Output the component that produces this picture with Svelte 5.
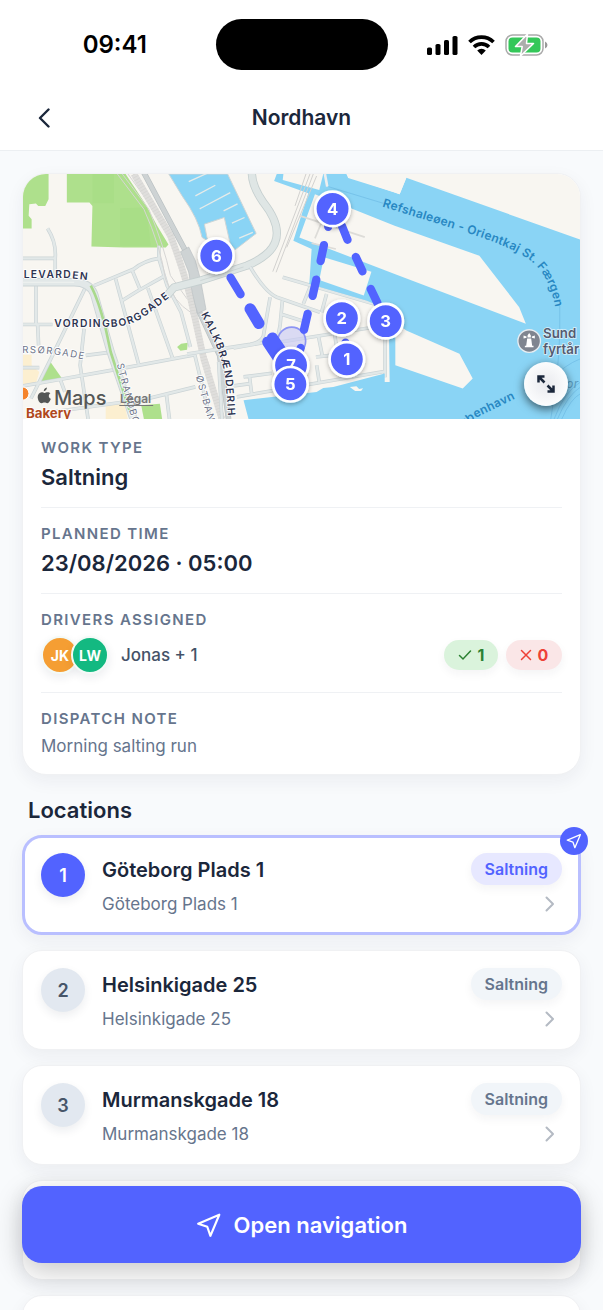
<script>
  const stops = [
    { n: 1, name: 'Göteborg Plads 1', address: 'Göteborg Plads 1', type: 'Saltning', active: true },
    { n: 2, name: 'Helsinkigade 25', address: 'Helsinkigade 25', type: 'Saltning', active: false },
    { n: 3, name: 'Murmanskgade 18', address: 'Murmanskgade 18', type: 'Saltning', active: false }
  ];

  const pins = [
    { n: 4, x: 398, y: 129 },
    { n: 6, x: 48, y: 270 },
    { n: 2, x: 426, y: 458 },
    { n: 3, x: 558, y: 467 },
    { n: 1, x: 441, y: 582 },
    { n: 7, x: 273, y: 600 },
    { n: 5, x: 271, y: 657 }
  ];

  const streetsWest =
    'M36 278H133 M110 188Q137 230 133 278V345 M36 477H125 M75 352V477 M80 477L83 540 M222 370L120 580L60 700 M250 360L370 310Q400 285 445 278 M315 340L385 600 M365 315L390 375 M412 368L487 580 M335 405L380 377L460 332 M445 240V278L470 360L512 440L540 545 M36 662L150 642L330 610L555 568 M60 750L200 730L330 712 M380 708L555 665 M553 568L600 762 M225 570L290 562 M220 490L208 600L232 762 M468 690L477 762 M148 642L162 680 M36 607H85';
  const streetsMid =
    'M150 304Q195 380 230 395L360 440 M248 335L540 420 M247 405L240 480L228 540 M330 365L310 415 M380 385L365 440 M240 445L310 467 M100 548L200 530 M355 510L368 575 M348 575L392 570 M405 510L410 545 M110 695L557 618 M350 600L358 650 M130 635L215 624 M148 635L155 690 M100 662L150 655 M556 520V636 M240 530L555 480 M55 590L65 762 M210 395L190 510Q185 530 150 537L-40 566';
</script>

{#snippet plane()}
  <svg class="plane" viewBox="0 0 24 24" aria-hidden="true">
    <path d="M21.5 2.5L2 10.8l8.4 2.8 2.900 8.400z" />
  </svg>
{/snippet}

<div class="app">
  <div class="status">
    <span class="clock">09:41</span>
    <span class="island"></span>
    <span class="signals">
      <svg width="31" height="20" viewBox="0 0 31 20" aria-label="Signal">
        <rect x="0" y="12.5" width="5" height="7.5" rx="1.6" /><rect x="8.5" y="9" width="5" height="11" rx="1.6" />
        <rect x="17" y="5" width="5" height="15" rx="1.6" /><rect x="25.5" y="1" width="5" height="19" rx="1.6" />
      </svg>
      <svg width="27" height="20" viewBox="0 0 27 20" aria-label="Wi-Fi">
        <g fill="none" stroke="#000" stroke-width="3.7"><path d="M1.5 7a17 17 0 0 1 24 0" /><path d="M6 12a10.700 10.700 0 0 1 15 0" /></g>
        <path d="M13.5 20l-4.300-4.400a5.800 5.800 0 0 1 8.600 0z" />
      </svg>
      <svg width="43" height="22" viewBox="0 0 43 22" aria-label="Charging">
        <rect x="1" y="1" width="37" height="20" rx="6.5" fill="none" stroke="#aaa" stroke-width="1.5" />
        <rect x="3.5" y="3.5" width="32" height="15" rx="4" fill="#34c759" />
        <path d="M40 7.500q2.500 1 2.500 3.500t-2.500 3.500z" fill="#999" />
        <path d="M22.500 0L10.500 12.500h6.700L15.500 22 28.500 9.500h-7z" fill="#acaeac" stroke="#fff" stroke-width="1.5" stroke-linejoin="round" />
      </svg>
    </span>
  </div>

  <header>
    <button class="back" aria-label="Back">
      <svg width="12" height="20" viewBox="0 0 12 20"><path d="M10.5 1.500L2 10l8.500 8.500" /></svg>
    </button>
    <h1>Nordhavn</h1>
  </header>

  <main>
    <section class="card overview">
      <div class="map">
        <svg viewBox="36 24 1677 738" preserveAspectRatio="xMidYMid slice" role="img" aria-label="Route map of Nordhavn">
          <rect x="36" y="24" width="1677" height="738" fill="#f8f6f1" />

          <g fill="#aee08c">
            <path d="M36 24H113V100L103 120H82L75 113L55 115L53 150L62 160V188H36z" />
            <path d="M168 24H345L405 115L440 180L474 236L466 245H340L242 242L245 120L236 110H168z" />
            <path d="M115 585L155 642L78 655z" />
            <path d="M500 545L512 535L532 532L530 553L510 556z" />
            <path d="M392 720L448 716L455 762H400z" />
          </g>
          <path d="M245 24H310V112H245z M328 127L408 125L420 240H328z" fill="#a5dc83" opacity=".6" />
          <path d="M36 568H62V600L85 620L75 655L36 660z M285 718L340 712L352 762H285z" fill="#fcefd0" />

          <g fill="none" stroke-linejoin="round">
            <path d={streetsWest} stroke="#cbd4d6" stroke-width="11" />
            <path d={streetsWest} stroke="#e2e8e8" stroke-width="7" />
            <path d="M36 350H190Q235 350 250 385L300 560L370 765" stroke="#cbd4d6" stroke-width="25" />
            <path d="M36 350H190Q235 350 250 385L300 560L370 765" stroke="#e2e8e8" stroke-width="20" />
            <path d="M36 350H190" stroke="#f0f2f0" stroke-width="3" />
            <path d="M240 360Q262 400 285 490L300 560L358 740" stroke="#a9d98c" stroke-width="8" />
            <g stroke="#d6d5d4" stroke-width="3">
              <path d="M320 24L400 130Q450 240 465 340Q490 410 540 440L600 610" />
              <path d="M335 24L415 130Q460 240 480 330L530 400" />
              <path d="M352 24L450 160L520 320" />
            </g>
            <path d="M370 24L480 210Q530 340 552 450L580 580L635 762" stroke="#dfdedc" stroke-width="20" />
            <path d="M370 24L480 210Q530 340 552 450L580 580L635 762" stroke="#cfcecc" stroke-width="20" stroke-dasharray="2 7" opacity=".6" />
            <path d="M400 20L525 255Q548 320 567 440L628 570L655 762" stroke="#b9c0c2" stroke-width="17" />
            <path d="M400 20L525 255Q548 320 567 440L628 570L655 762" stroke="#ced3d4" stroke-width="13" />
          </g>
          <path d="M510 258L535 244L555 285L570 340L587 432L562 444Q545 390 535 320z" fill="#ced3d4" stroke="#b9c0c2" stroke-width="2" />

          <g transform="translate(570)">
            <g fill="none" stroke-linejoin="round">
              <path d="M155 20Q155 60 190 110Q245 180 225 230Q210 270 140 300L0 345L-80 366L-105 395" stroke="#c5cfcf" stroke-width="25" />
              <path d="M155 20Q155 60 190 110Q245 180 225 230Q210 270 140 300L0 345L-80 366L-105 395" stroke="#dfe6e5" stroke-width="20" />
              <path d="M130 304L0 345" stroke="#c5cfcf" stroke-width="2" />
              <path d={streetsMid} stroke="#cbd4d6" stroke-width="11" />
              <path d={streetsMid} stroke="#e2e8e8" stroke-width="7" />
            </g>
            <path d="M-95 24H82L168 203L105 252L90 235L72 155L12 175L22 225L5 215Q-5 160 -55 90z" fill="#8ad4f5" stroke="#ced5d6" stroke-width="3" />
            <g stroke="#e6ebe9" stroke-width="4" fill="none">
              <path d="M-35 47L20 22M-15 90L45 58M0 128L90 80M70 135L112 114M95 172L133 155M117 217L158 200M2 127L-2 129" />
            </g>
            <path fill="#8ad4f5" d="M222 45L230 24H440L445 32L585 80L600 85L620 35L1145 222V762H145L130 705L350 680L370 668L400 665L555 625V650H570L567 440L540 422L500 405L328 355L335 250L280 225L325 82z" />
            <g fill="#f8f6f1">
              <path d="M250 24H370L358 72L248 42z" />
              <path d="M440 24H625L600 85L585 80L445 36z" />
              <path d="M345 85L298 215L585 325L980 475L960 425L840 270L655 205L585 180L440 122z" />
              <path d="M372 275L515 318L492 390L358 343z" />
              <path d="M587 470L620 495L780 565L820 640L790 670L587 600z" />
              <path d="M450 665l20-2 8 8 12-2-6 8h-18z" />
            </g>
            <g fill="none" stroke="#d2d1cf" stroke-width="3">
              <path d="M330 24L218 318M340 24L228 320M350 30L260 245M318 24L285 120" />
              <path d="M300 150L495 214M375 145L345 218M335 232L408 250" stroke-width="5" stroke="#dddcd8" />
              <path d="M375 24L382 62" stroke="#eee" stroke-width="8" />
            </g>
            <path d="M385 62L550 112M1082 420V500Q1080 610 1055 762M1145 580Q1095 600 1060 640M1145 650Q1095 680 1065 762M1145 665Q1105 690 1075 762M1145 685Q1115 700 1088 762" fill="none" stroke="#6cb9e4" stroke-width="2" />

            <circle cx="275" cy="527" r="42" fill="#c9cbf4" fill-opacity=".65" stroke="#8d95f3" stroke-width="5" />
            <g fill="none" stroke="#5263ff" stroke-width="25" stroke-linecap="round">
              <path d="M91 336L121 386M385 183V180M372 238L362 286M349 342L338 391M323 445L312 493M302 548L298 560M426 180L443 222M468 274L488 317M513 370L533 412M437 532V540" />
              <path d="M150 430L176 474M203 530L232 574M217 518L240 552" stroke-width="34" />
            </g>
          </g>

          <defs>
            <path id="p-levarden" d="M38 338L180 338L256 346" />
            <path id="p-vording" d="M130 484H280Q350 488 400 455L530 355" />
            <path id="p-rsor" d="M34 563Q130 560 250 590" />
            <path id="p-strand" d="M318 597L345 700L375 800" />
            <path id="p-ostban" d="M556 634L600 790L620 860" />
            <path id="p-kalk" d="M572 446L604 510Q640 590 646 650L662 860" />
            <path id="p-refs" d="M1117 122L1345 192Q1500 240 1550 275Q1640 330 1646 500" />
            <path id="p-havn" d="M1362 788L1400 758L1560 680" />
            <filter id="pin-shadow" x="-30%" y="-30%" width="160%" height="160%"><feDropShadow dx="0" dy="5" stdDeviation="6" flood-opacity=".3" /></filter>
          </defs>
          <g class="street">
            <text><textPath href="#p-levarden">LEVARDEN</textPath></text>
            <text><textPath href="#p-vording">VORDINGBORGGADE</textPath></text>
            <text><textPath href="#p-kalk">KALKBRÆNDERIH</textPath></text>
          </g>
          <g class="street minor">
            <text><textPath href="#p-rsor">RSØRGADE</textPath></text>
            <text><textPath href="#p-strand">STRANDBO</textPath></text>
            <text><textPath href="#p-ostban">ØSTBAN</textPath></text>
          </g>
          <g class="sea">
            <text><textPath href="#p-refs">Refshaleøen - Orientkaj St. Færgen</textPath></text>
            <text><textPath href="#p-havn">øbenhavn</textPath></text>
            <text class="faint" x="1672" y="668">or</text>
          </g>

          <g class="place">
            <text x="1602" y="518">Sund</text>
            <text x="1602" y="567">fyrtår</text>
          </g>
          <g transform="translate(1560 527)">
            <circle r="34" fill="#7f8590" stroke="#e7edf2" stroke-width="4" />
            <path d="M-6-8H6L9 14H13V19H-13V14H-9z M-5-17L0-24L5-17V-11H-5z M-17-17L-8-14V-10L-17-8z M17-17L8-14V-10L17-8z" fill="#fff" />
          </g>

          <circle cx="34" cy="685" r="20" fill="#f5832b" stroke="#fff" stroke-width="3" />
          <text class="bakery" x="45" y="758">Bakery</text>
          <g fill="#555756">
            <path transform="translate(79 667) scale(2)" d="M14.500 0c.2 2.600-2 5.400-4.700 5.500C9.500 3 11.900.3 14.500 0zM19.800 8.400c-3.600 2.200-3 7 .7 8.500-.8 2.400-3 6.600-5.300 6.700-1.700.1-2.300-1-4.300-1s-2.700 1-4.300 1C3.300 23.700.6 18.300.6 14.200c0-4 2.500-7.100 6-7.200 1.700 0 3.200 1.100 4.200 1.100s2.800-1.300 4.900-1.100c1.600.1 3.200.8 4.100 1.400z" />
            <text class="brand" x="129" y="719">Maps</text>
          </g>
          <text class="legal" x="328" y="714">Legal</text>
          <path d="M326 721H428" stroke="#777" stroke-width="3" />

          <g transform="translate(570)" class="pins">
            {#each pins as p}
              <g filter="url(#pin-shadow)">
                <circle cx={p.x} cy={p.y} r="52" />
                <text x={p.x} y={p.y + 18}>{p.n}</text>
              </g>
            {/each}
          </g>
        </svg>
        <button class="expand" aria-label="Expand map">
          <svg width="20" height="20" viewBox="0 0 20 20"><path d="M2.500 8.500V2.500H8.500M3 3L8.500 8.500M17.500 11.500V17.500H11.500M17 17L11.500 11.500" /></svg>
        </button>
      </div>

      <dl>
        <div class="row"><dt>WORK TYPE</dt><dd class="value">Saltning</dd></div>
        <div class="row"><dt>PLANNED TIME</dt><dd class="value">23/08/2026 · 05:00</dd></div>
        <div class="row">
          <dt>DRIVERS ASSIGNED</dt>
          <dd class="drivers">
            <span class="avatar amber">JK</span><span class="avatar green">LW</span>
            <span class="names">Jonas + 1</span>
            <span class="count yes">
              <svg width="14" height="12" viewBox="0 0 14 12"><path d="M1.500 6.500L5 10 12.500 2" /></svg>1
            </span>
            <span class="count no">
              <svg width="12" height="12" viewBox="0 0 12 12"><path d="M1.500 1.500l9 9M10.500 1.500l-9 9" /></svg>0
            </span>
          </dd>
        </div>
        <div class="row"><dt>DISPATCH NOTE</dt><dd class="note">Morning salting run</dd></div>
      </dl>
    </section>

    <h2>Locations</h2>
    <ol>
      {#each stops as s}
        <li class="card stop" class:active={s.active}>
          <span class="num">{s.n}</span>
          <div class="text">
            <strong>{s.name}</strong>
            <span>{s.address}</span>
          </div>
          <div class="side">
            <span class="tag">{s.type}</span>
            <svg width="10" height="16" viewBox="0 0 10 16" aria-hidden="true"><path d="M1.500 1.500L8 8l-6.500 6.500" /></svg>
          </div>
          {#if s.active}<span class="here">{@render plane()}</span>{/if}
        </li>
      {/each}
      <li class="card stop"></li>
      <li class="card stop"></li>
    </ol>
  </main>

  <button class="cta">{@render plane()}Open navigation</button>
</div>

<style>
  :global(body) { margin: 0; }
  * { box-sizing: border-box; }
  button { font: inherit; border: 0; padding: 0; cursor: pointer; }
  .app {
    position: relative;
    display: flex;
    flex-direction: column;
    height: 100vh;
    overflow: hidden;
    background: #f8fafc;
    color: #1b273b;
    font-family: Inter, "Liberation Sans", sans-serif;
  }
  .status {
    display: grid;
    grid-template-columns: 1fr 172px 1fr;
    align-items: center;
    padding: 19px 0 16px;
    background: #fff;
    color: #000;
  }
  .clock { justify-self: center; padding-left: 14px; font-size: 24px; font-weight: 600; }
  .island { height: 51px; border-radius: 26px; background: #000; }
  .signals { display: flex; align-items: center; justify-content: center; gap: 10px; margin-right: 16px; }
  .signals svg { flex: none; }
  header {
    display: grid;
    grid-template-columns: 44px 1fr 44px;
    align-items: center;
    height: 65px;
    padding: 0 22px;
    background: #fff;
    border-bottom: 1px solid #eceff2;
  }
  .back { display: grid; place-items: center; height: 44px; background: none; }
  .back path { fill: none; stroke: #1b273b; stroke-width: 2.4; stroke-linecap: round; stroke-linejoin: round; }
  h1 { margin: 0; text-align: center; font-size: 21px; line-height: 28px; font-weight: 600; }
  main { flex: 1; min-height: 0; overflow-y: auto; scrollbar-width: none; padding: 22px 22px 0; }
  .card {
    background: #fff;
    border: 1px solid #f0f1f3;
    border-radius: 20px;
    box-shadow: 0 6px 18px rgba(30, 40, 60, .06);
  }
  .overview { overflow: hidden; border-radius: 24px; }
  .map { position: relative; display: flex; }
  .map > svg { display: block; width: 100%; height: auto; }
  .map text { font-family: Inter, "Liberation Sans", sans-serif; }
  .street { font-size: 31px; font-weight: 600; letter-spacing: 4px; fill: #2d3350; stroke: #fff; stroke-width: 5px; paint-order: stroke; }
  .minor { font-weight: 400; font-size: 29px; fill: #6e7488; }
  .sea { font-size: 36px; font-weight: 600; fill: #2787c2; letter-spacing: 1px; }
  .sea .faint { fill: #5b9fc4; font-style: italic; font-weight: 400; }
  .place { font-size: 40px; font-weight: 600; fill: #545b70; stroke: #dcf0fa; stroke-width: 5px; paint-order: stroke; }
  .bakery { font-size: 40px; font-weight: 700; fill: #b0481d; stroke: #fff; stroke-width: 5px; paint-order: stroke; }
  .brand { font-size: 60px; font-weight: 500; }
  .legal { font-size: 36px; font-weight: 600; fill: #777; }
  .pins circle { fill: #5263ff; stroke: #fff; stroke-width: 8px; }
  .pins text { fill: #fff; font-size: 50px; font-weight: 700; text-anchor: middle; }
  .expand {
    position: absolute;
    right: 12px;
    bottom: 13px;
    display: grid;
    place-items: center;
    width: 44px;
    height: 44px;
    border-radius: 50%;
    background: radial-gradient(#e9eaee, #fafbfc 65%);
    box-shadow: 0 3px 10px rgba(0, 0, 0, .6);
  }
  .expand path { fill: none; stroke: #1b273b; stroke-width: 2.5; }
  dl { margin: 0; padding: 3px 18px 0; }
  .row { padding: 17px 0; border-bottom: 1px solid #eff1f4; }
  .row:last-child { border-bottom: 0; }
  dt { margin-bottom: 6px; font-size: 15px; line-height: 18px; font-weight: 600; letter-spacing: 0.09em; color: #66758d; }
  dd { margin: 0; }
  .value { margin-bottom: -1px; font-size: 22px; line-height: 28px; font-weight: 600; }
  .note { margin-bottom: -1px; font-size: 17px; line-height: 24px; color: #66758d; }
  .drivers { display: flex; align-items: center; height: 40px; }
  .avatar {
    display: grid;
    place-items: center;
    width: 38px;
    height: 38px;
    border: 2px solid #f3faf7;
    border-radius: 50%;
    color: #fff;
    font-size: 14px;
    font-weight: 700;
    box-shadow: 0 4px 10px rgba(30, 40, 60, .08);
  }
  .amber { background: #f59e33; }
  .green { margin-left: -8px; background: #13b981; }
  .names { flex: 1; margin-left: 12px; font-size: 17px; font-weight: 500; color: #445268; }
  .count {
    display: flex;
    align-items: center;
    justify-content: center;
    gap: 6px;
    width: 54px;
    height: 30px;
    margin-left: 8px;
    border-radius: 15px;
    font-size: 16px;
    font-weight: 700;
    box-shadow: 0 4px 10px rgba(30, 40, 60, .05);
  }
  .count path { fill: none; stroke: currentColor; stroke-width: 1.5; stroke-linecap: round; }
  .yes { background: #daf3dc; color: #2b8132; }
  .no { background: #fae6e7; color: #ee4137; width: 56px; }
  h2 { margin: 21px 6px 11px; font-size: 22px; line-height: 28px; font-weight: 600; }
  ol { display: grid; gap: 15px; margin: 0; padding: 0; list-style: none; }
  .stop { position: relative; display: flex; gap: 17px; height: 100px; padding: 17px 18px; }
  .active { border: 3px solid #b9bfff; padding: 15px 16px; }
  .num {
    display: grid;
    place-items: center;
    flex: none;
    width: 44px;
    height: 44px;
    border-radius: 50%;
    background: #e2e8f0;
    color: #475569;
    font-size: 18px;
    font-weight: 600;
    box-shadow: 0 4px 10px rgba(30, 40, 60, .08);
  }
  .active .num { background: #5263ff; color: #fff; }
  .text { display: flex; flex-direction: column; gap: 5px; flex: 1; min-width: 0; }
  .text strong { font-size: 20px; line-height: 34px; font-weight: 600; }
  .text span { font-size: 17px; line-height: 24px; color: #66758d; }
  .side { display: flex; flex-direction: column; align-items: flex-end; gap: 11px; }
  .side svg { margin-right: 7px; }
  .side path { fill: none; stroke: #b4bac3; stroke-width: 2; stroke-linecap: round; stroke-linejoin: round; }
  .tag {
    padding: 0 14px;
    border-radius: 16px;
    background: #f1f5f9;
    color: #66758d;
    font-size: 16px;
    line-height: 32px;
    font-weight: 600;
    box-shadow: 0 4px 10px rgba(30, 40, 60, .05);
  }
  .active .tag { background: #e7e8ff; color: #5263ff; }
  .here {
    position: absolute;
    top: -11px;
    right: -10px;
    display: grid;
    place-items: center;
    width: 28px;
    height: 28px;
    border-radius: 50%;
    background: #5263ff;
  }
  .plane { width: 26px; height: 26px; fill: none; stroke: #fff; stroke-width: 2; stroke-linejoin: round; }
  .here .plane { width: 16px; height: 16px; }
  .cta {
    position: absolute;
    left: 22px;
    right: 22px;
    bottom: 47px;
    display: flex;
    align-items: center;
    justify-content: center;
    gap: 12px;
    height: 77px;
    border-radius: 20px;
    background: #5263ff;
    color: #fff;
    font-size: 22px;
    font-weight: 600;
    box-shadow: 0 8px 28px rgba(0, 0, 0, .22);
  }
</style>
